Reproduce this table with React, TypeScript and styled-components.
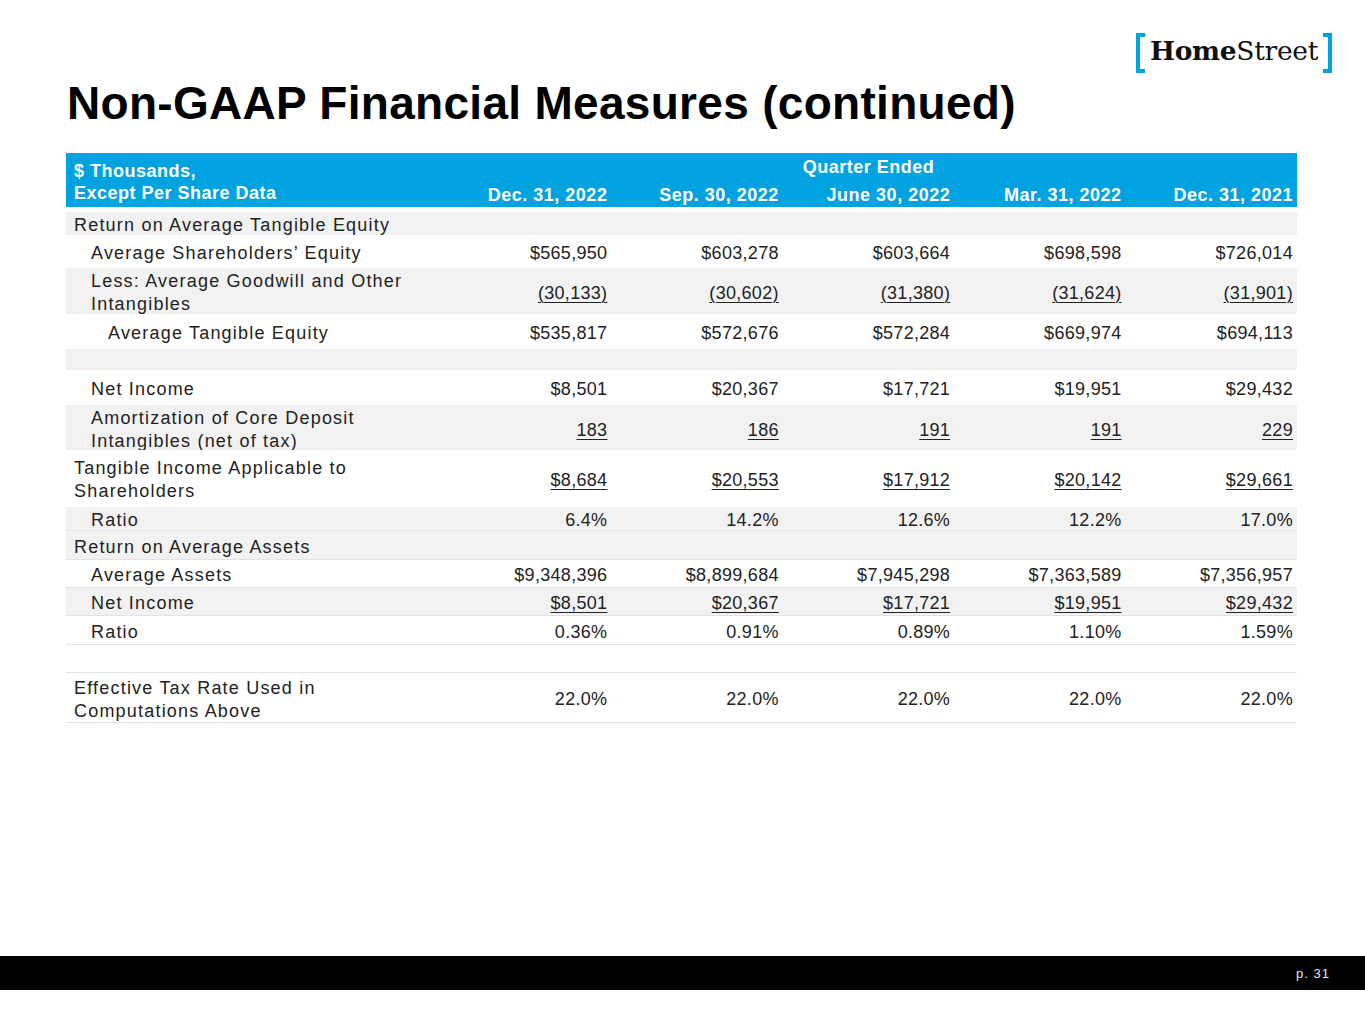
import React from "react";
import styled, { createGlobalStyle } from "styled-components";

const GlobalStyle = createGlobalStyle`
  html, body {
    margin: 0;
    padding: 0;
    background: #ffffff;
  }
  body {
    font-family: "Liberation Sans", Arial, sans-serif;
    color: #1e1e1e;
  }
`;

const BLUE = "#00a3e0";
const GREY = "#f2f2f2";
const COLS = "374px repeat(5, 1fr)";

const Page = styled.div`
  width: 1365px;
  height: 1024px;
  display: flex;
  flex-direction: column;
  overflow: hidden;
`;

const TopBar = styled.div`
  display: flex;
  justify-content: flex-end;
  padding: 34px 33px 0 0;
`;

const Logo = styled.div`
  display: flex;
  align-items: center;
  gap: 5px;
  height: 38px;
`;

const Bracket = styled.span<{ $side: "left" | "right" }>`
  display: block;
  width: 5px;
  height: 32px;
  border: 4px solid ${BLUE};
  ${p => (p.$side === "left" ? "border-right: none;" : "border-left: none;")}
`;

const LogoText = styled.span`
  font-family: "DejaVu Serif", "Liberation Serif", serif;
  font-size: 26.5px;
  color: #111;
  letter-spacing: -0.3px;
  line-height: 1;
  padding-bottom: 3px;
  & > b {
    font-weight: 700;
  }
`;

const Title = styled.h1`
  margin: 5px 0 0 0;
  padding-left: 67px;
  font-family: "Liberation Sans", Arial, sans-serif;
  font-weight: 700;
  font-size: 46px;
  line-height: 52px;
  letter-spacing: 0.3px;
  color: #000;
`;

const Table = styled.div`
  margin: 24px 0 0 66px;
  width: 1231px;
  display: flex;
  flex-direction: column;
`;

const HeadRow = styled.div`
  display: grid;
  grid-template-columns: ${COLS};
  grid-template-rows: 22px 22px;
  background: ${BLUE};
  color: #fff;
  font-weight: 700;
  font-size: 18px;
  letter-spacing: 0.5px;
  line-height: 22px;
  padding: 7px 0 3px;
  margin-bottom: 5px;
`;

const HeadLabel = styled.div`
  grid-row: 1 / span 2;
  grid-column: 1;
  padding-left: 8px;
`;

const HeadGroup = styled.div`
  grid-row: 1;
  grid-column: 2 / span 5;
  text-align: center;
  margin-top: -4px;
`;

const HeadDate = styled.div`
  grid-row: 2;
  text-align: right;
  padding-right: 4px;
  margin-top: 2px;
`;

const Row = styled.div<{ $shade: boolean; $h: number; $line: boolean }>`
  display: grid;
  grid-template-columns: ${COLS};
  align-items: center;
  box-sizing: border-box;
  height: ${p => p.$h}px;
  background: ${p => (p.$shade ? GREY : "#fff")};
  border-bottom: 1px solid ${p => (p.$line ? "#e3e3e3" : "transparent")};
  font-size: 18px;
  line-height: 23px;
`;

/* cells sit a little low in their rows, as the slide font does */
const Cell = styled.div`
  padding-top: 2px;
  margin-bottom: -2px;
  color: #222;
`;

const Label = styled(Cell)<{ $level: number }>`
  padding-left: ${p => 8 + p.$level * 17}px;
  letter-spacing: 1.2px;
`;

const Value = styled(Cell)<{ $under: boolean }>`
  text-align: right;
  padding-right: 4px;
  letter-spacing: 0.3px;
  & > span {
    text-decoration: ${p => (p.$under ? "underline" : "none")};
    text-decoration-thickness: 1px;
    text-underline-offset: 3px;
  }
`;

const Footer = styled.div`
  margin-top: auto;
  margin-bottom: 34px;
  height: 34px;
  background: #000;
  display: flex;
  align-items: center;
  justify-content: flex-end;
  padding-right: 35px;
`;

const PageNo = styled.span`
  color: #e8e8e8;
  font-size: 13px;
  letter-spacing: 1px;
`;

type Line = {
  label: string[];
  level: number;
  values: string[];
  shade: boolean;
  h: number;
  under?: boolean;
  line?: boolean;
};

const dates = ["Dec. 31, 2022", "Sep. 30, 2022", "June 30, 2022", "Mar. 31, 2022", "Dec. 31, 2021"];

const rows: Line[] = [
  { label: ["Return on Average Tangible Equity"], level: 0, values: [], shade: true, h: 23 },
  {
    label: ["Average Shareholders’ Equity"],
    level: 1,
    values: ["$565,950", "$603,278", "$603,664", "$698,598", "$726,014"],
    shade: false,
    h: 33,
  },
  {
    label: ["Less: Average Goodwill and Other", "Intangibles"],
    level: 1,
    values: ["(30,133)", "(30,602)", "(31,380)", "(31,624)", "(31,901)"],
    shade: true,
    h: 46,
    under: true,
  },
  {
    label: ["Average Tangible Equity"],
    level: 2,
    values: ["$535,817", "$572,676", "$572,284", "$669,974", "$694,113"],
    shade: false,
    h: 35,
  },
  { label: [], level: 0, values: [], shade: true, h: 21 },
  {
    label: ["Net Income"],
    level: 1,
    values: ["$8,501", "$20,367", "$17,721", "$19,951", "$29,432"],
    shade: false,
    h: 35,
  },
  {
    label: ["Amortization of Core Deposit", "Intangibles (net of tax)"],
    level: 1,
    values: ["183", "186", "191", "191", "229"],
    shade: true,
    h: 45,
    under: true,
  },
  {
    label: ["Tangible Income Applicable to", "Shareholders"],
    level: 0,
    values: ["$8,684", "$20,553", "$17,912", "$20,142", "$29,661"],
    shade: false,
    h: 57,
    under: true,
  },
  {
    label: ["Ratio"],
    level: 1,
    values: ["6.4%", "14.2%", "12.6%", "12.2%", "17.0%"],
    shade: true,
    h: 24,
    line: true,
  },
  { label: ["Return on Average Assets"], level: 0, values: [], shade: true, h: 29, line: true },
  {
    label: ["Average Assets"],
    level: 1,
    values: ["$9,348,396", "$8,899,684", "$7,945,298", "$7,363,589", "$7,356,957"],
    shade: false,
    h: 28,
    line: true,
  },
  {
    label: ["Net Income"],
    level: 1,
    values: ["$8,501", "$20,367", "$17,721", "$19,951", "$29,432"],
    shade: true,
    h: 28,
    under: true,
    line: true,
  },
  {
    label: ["Ratio"],
    level: 1,
    values: ["0.36%", "0.91%", "0.89%", "1.10%", "1.59%"],
    shade: false,
    h: 29,
    line: true,
  },
  { label: [], level: 0, values: [], shade: false, h: 28, line: true },
  {
    label: ["Effective Tax Rate Used in", "Computations Above"],
    level: 0,
    values: ["22.0%", "22.0%", "22.0%", "22.0%", "22.0%"],
    shade: false,
    h: 50,
    line: true,
  },
];

export default function App() {
  return (
    <Page>
      <GlobalStyle />
      <TopBar>
        <Logo>
          <Bracket $side="left" />
          <LogoText>
            <b>Home</b>Street
          </LogoText>
          <Bracket $side="right" />
        </Logo>
      </TopBar>
      <Title>Non-GAAP Financial Measures (continued)</Title>
      <Table>
        <HeadRow>
          <HeadLabel>
            $ Thousands,
            <br />
            Except Per Share Data
          </HeadLabel>
          <HeadGroup>Quarter Ended</HeadGroup>
          {dates.map(d => (
            <HeadDate key={d}>{d}</HeadDate>
          ))}
        </HeadRow>
        {rows.map((r, i) => (
          <Row key={i} $shade={r.shade} $h={r.h} $line={!!r.line}>
            <Label $level={r.level}>
              {r.label.map((t, j) => (
                <div key={j}>{t}</div>
              ))}
            </Label>
            {r.values.map((v, j) => (
              <Value key={j} $under={!!r.under}>
                <span>{v}</span>
              </Value>
            ))}
          </Row>
        ))}
      </Table>
      <Footer>
        <PageNo>p. 31</PageNo>
      </Footer>
    </Page>
  );
}
